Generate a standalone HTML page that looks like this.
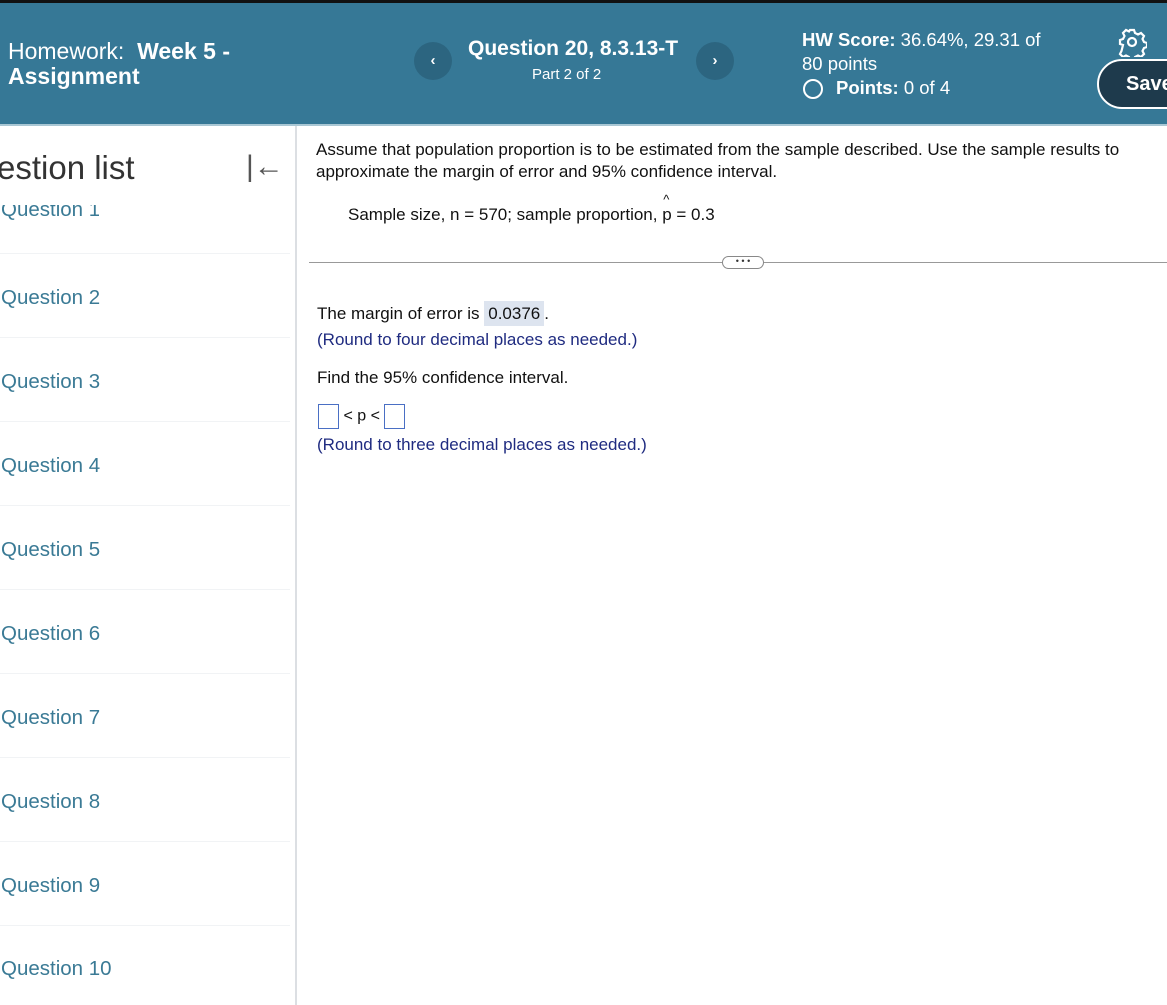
<!DOCTYPE html>
<html><head><meta charset="utf-8"><style>
*{margin:0;padding:0;box-sizing:border-box}
body{width:1167px;height:1005px;overflow:hidden;background:#fff;font-family:"Liberation Sans",Arial,sans-serif;position:relative}
.top{position:absolute;left:0;top:0;width:1167px;height:3px;background:#111}
.hdr{position:absolute;left:0;top:3px;width:1167px;height:121px;background:#367896;color:#fff}
.hline{position:absolute;left:0;top:124px;width:1167px;height:2px;background:#a9c7d4}
.a{position:absolute;white-space:nowrap}
.circ{position:absolute;width:38px;height:38px;border-radius:50%;background:#2c6580;color:#fff;text-align:center;line-height:38px;font-size:15px;font-weight:bold}
.side{position:absolute;left:295px;top:126px;width:2px;height:879px;background:#dcdfe3}
.q{position:absolute;left:1px;font-size:20.5px;color:#3a7a95}
.sep{position:absolute;left:0;width:290px;height:1px;background:#f1f3f5}
.t{font-size:17px;color:#111}
.b{color:#1f2b80}
.box{display:inline-block;width:21px;height:25px;border:1px solid #4a6fc4;vertical-align:middle}
</style></head><body>
<div class="top"></div>
<div class="hdr">
<div class="a" style="left:8px;top:35px;font-size:23px">Homework:&nbsp; <b>Week 5 -</b></div>
<div class="a" style="left:8px;top:60px;font-size:23px;font-weight:bold">Assignment</div>
<div class="circ" style="left:414px;top:39px">‹</div>
<div class="a" style="left:468px;top:34px;font-size:21px;font-weight:bold">Question 20, 8.3.13-T</div>
<div class="a" style="left:532px;top:63px;font-size:15px">Part 2 of 2</div>
<div class="circ" style="left:696px;top:39px">›</div>
<div class="a" style="left:802px;top:26px;font-size:18.5px"><b>HW Score:</b> 36.64%, 29.31 of</div>
<div class="a" style="left:802px;top:50px;font-size:18.5px">80 points</div>
<div class="a" style="left:803px;top:76px;width:20px;height:20px;border:2px solid #fff;border-radius:50%"></div>
<div class="a" style="left:836px;top:74px;font-size:18.5px"><b>Points:</b> 0 of 4</div>
<svg class="a" style="left:1117px;top:24px" width="30" height="30" viewBox="0 0 30 30"><g fill="none" stroke="#fff" stroke-width="2.2"><circle cx="15" cy="15" r="4"/><path d="M13 3h4l1 3 3 1.5 3-1.5 3 3-1.5 3 1.5 3 3 1v4l-3 1-1.5 3 1.5 3-3 3-3-1.5-3 1.5-1 3h-4l-1-3-3-1.5-3 1.5-3-3 1.5-3L6 18l-3-1v-4l3-1 1.5-3L6 6l3-3 3 1.5z"/></g></svg>
<div class="a" style="left:1097px;top:56px;width:110px;height:50px;border:2px solid #fff;border-radius:25px;background:#1e3a4c;color:#fff;font-size:20px;font-weight:bold;padding:12px 0 0 27px">Save</div>
</div>
<div class="hline"></div>
<div class="side"></div>
<div class="a" style="left:-3px;top:149px;font-size:33px;color:#333">estion list</div>
<div class="a" style="left:246px;top:150px;font-size:30px;color:#555">|&larr;</div>
<div class="a" style="left:0;top:205px;height:20px;overflow:hidden"><div class="q" style="position:relative;top:-7px;left:1px">Question 1</div></div>
<div class="sep" style="top:253px"></div>
<div class="q" style="top:286px">Question 2</div>
<div class="sep" style="top:337px"></div>
<div class="q" style="top:370px">Question 3</div>
<div class="sep" style="top:421px"></div>
<div class="q" style="top:454px">Question 4</div>
<div class="sep" style="top:505px"></div>
<div class="q" style="top:538px">Question 5</div>
<div class="sep" style="top:589px"></div>
<div class="q" style="top:622px">Question 6</div>
<div class="sep" style="top:673px"></div>
<div class="q" style="top:706px">Question 7</div>
<div class="sep" style="top:757px"></div>
<div class="q" style="top:790px">Question 8</div>
<div class="sep" style="top:841px"></div>
<div class="q" style="top:874px">Question 9</div>
<div class="sep" style="top:925px"></div>
<div class="q" style="top:957px">Question 10</div>

<div class="a t" style="left:316px;top:140px">Assume that population proportion is to be estimated from the sample described. Use the sample results to</div>
<div class="a t" style="left:316px;top:162px">approximate the margin of error and 95% confidence interval.</div>
<div class="a t" style="left:348px;top:205px">Sample size, n = 570; sample proportion, <span style="position:relative">p<span style="position:absolute;left:1px;top:-13px;font-size:13px">^</span></span> = 0.3</div>
<div class="a" style="left:309px;top:262px;width:858px;height:1px;background:#999"></div>
<div class="a" style="left:722px;top:256px;width:42px;height:13px;border:1px solid #888;border-radius:7px;background:#fff;font-size:9px;text-align:center;line-height:9px;color:#333">• • •</div>
<div class="a t" style="left:317px;top:304px">The margin of error is <span style="background:#dde4ef;padding:3px 4px">0.0376</span>.</div>
<div class="a t b" style="left:317px;top:330px">(Round to four decimal places as needed.)</div>
<div class="a t" style="left:317px;top:368px">Find the 95% confidence interval.</div>
<div class="a t" style="left:318px;top:404px;font-size:16px"><span class="box"></span> &lt; p &lt; <span class="box"></span></div>
<div class="a t b" style="left:317px;top:435px">(Round to three decimal places as needed.)</div>
</body></html>
